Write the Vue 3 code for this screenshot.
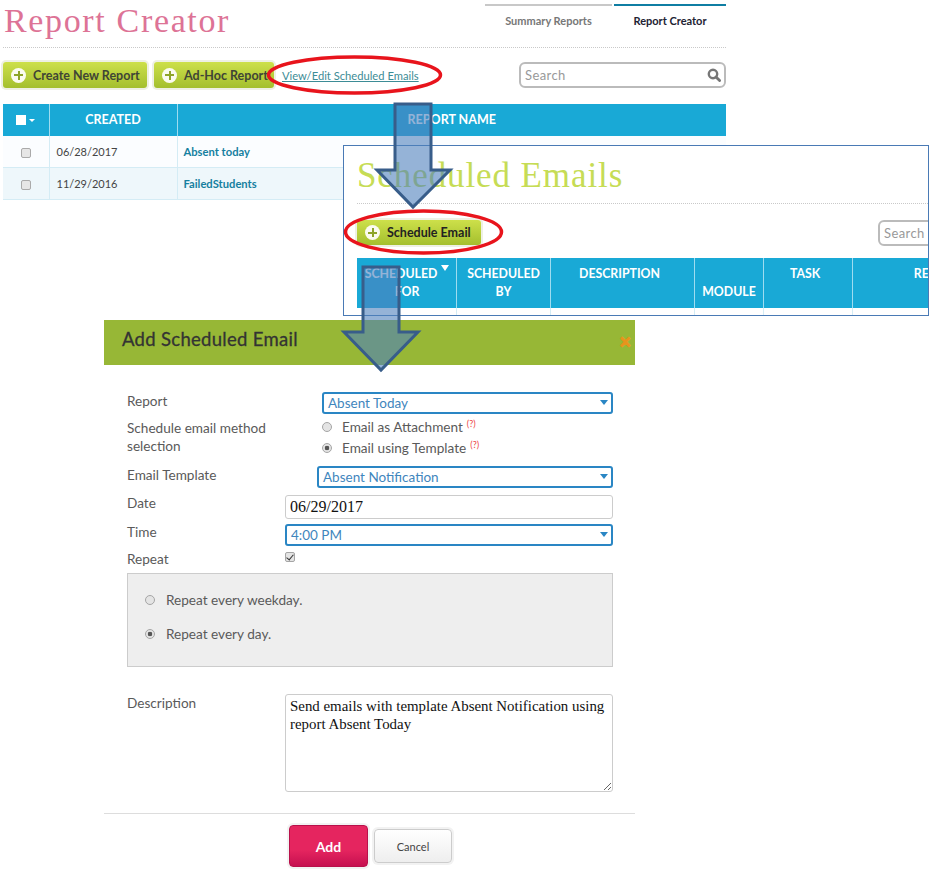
<script setup>
import { ref } from 'vue'

const reports = ref([
  { created: '06/28/2017', name: 'Absent today' },
  { created: '11/29/2016', name: 'FailedStudents' }
])

const emailColumns = [
  { label: 'SCHEDULED FOR', width: 99, sorted: true },
  { label: 'SCHEDULED BY', width: 94 },
  { label: 'DESCRIPTION', width: 144, left: true },
  { label: 'MODULE', width: 69, bottom: true },
  { label: 'TASK', width: 89, left: true },
  { label: 'RESULT', width: 166 }
]

const date = ref('06/29/2017')
const description = ref('Send emails with template Absent Notification using report Absent Today')
</script>

<template>
  <div class="canvas">
    <!-- Report creator page -->
    <section class="report-panel">
      <header class="page-head">
        <h1 class="page-title">Report Creator</h1>
        <nav class="tabs">
          <a class="tab">Summary Reports</a>
          <a class="tab active">Report Creator</a>
        </nav>
      </header>

      <div class="toolbar">
        <button class="btn-green wide">
          <span class="plus"></span>
          Create New Report
        </button>
        <button class="btn-green">
          <span class="plus"></span>
          Ad-Hoc Report
        </button>
        <a class="sched-link">View/Edit Scheduled Emails</a>
        <div class="search">
          <span>Search</span>
          <svg width="14" height="14" viewBox="0 0 14 14">
            <circle cx="6" cy="6" r="4.2" fill="none" stroke="#777" stroke-width="2.4" />
            <path d="M9 9l3.6 3.6" stroke="#777" stroke-width="2.8" stroke-linecap="round" />
          </svg>
        </div>
      </div>

      <table class="report-table">
        <thead>
          <tr>
            <th class="col-check"><span class="head-check"></span><span class="caret"></span></th>
            <th class="col-created">CREATED</th>
            <th>REPORT NAME</th>
          </tr>
        </thead>
        <tbody>
          <tr v-for="row in reports" :key="row.name">
            <td class="center"><span class="row-check"></span></td>
            <td>{{ row.created }}</td>
            <td class="name">{{ row.name }}</td>
          </tr>
        </tbody>
      </table>
    </section>

    <!-- Scheduled emails page -->
    <section class="emails-panel">
      <h2 class="emails-title">Scheduled Emails</h2>
      <div class="emails-toolbar">
        <button class="btn-green schedule">
          <span class="plus"></span>
          Schedule Email
        </button>
        <div class="search cut"><span>Search</span></div>
      </div>
      <div class="emails-head">
        <div
          v-for="col in emailColumns"
          :key="col.label"
          class="emails-col"
          :class="{ bottom: col.bottom, left: col.left, sorted: col.sorted }"
          :style="{ width: col.width + 'px' }"
        >
          <span>{{ col.label }}</span>
          <i v-if="col.sorted" class="sort"></i>
        </div>
      </div>
      <div class="emails-row">
        <div v-for="col in emailColumns" :key="col.label" :style="{ width: col.width + 'px' }"></div>
      </div>
    </section>

    <!-- Add scheduled email dialog -->
    <section class="dialog">
      <header class="dialog-head">
        <h3>Add Scheduled Email</h3>
        <span class="close">×</span>
      </header>

      <div class="form">
        <div class="row">
          <label>Report</label>
          <div class="select s-report">Absent Today</div>
        </div>
        <div class="row row-method">
          <label>Schedule email method<br />selection</label>
          <div class="methods">
            <div class="option">
              <input type="radio" disabled />
              <span>Email as Attachment</span><sup>(?)</sup>
            </div>
            <div class="option">
              <input type="radio" disabled checked />
              <span>Email using Template</span><sup>(?)</sup>
            </div>
          </div>
        </div>
        <div class="row row-template">
          <label>Email Template</label>
          <div class="select s-template">Absent Notification</div>
        </div>
        <div class="row row-date">
          <label>Date</label>
          <input v-model="date" class="text-input" type="text" />
        </div>
        <div class="row row-time">
          <label>Time</label>
          <div class="select s-time">4:00 PM</div>
        </div>
        <div class="row row-repeat">
          <label>Repeat</label>
          <input class="repeat-check" type="checkbox" checked disabled />
        </div>
        <div class="repeat-box">
          <div class="option">
            <input type="radio" disabled />
            <span>Repeat every weekday.</span>
          </div>
          <div class="option">
            <input type="radio" disabled checked />
            <span>Repeat every day.</span>
          </div>
        </div>
        <div class="row row-desc">
          <label>Description</label>
          <textarea v-model="description" class="text-area"></textarea>
        </div>
      </div>

      <footer class="dialog-foot">
        <button class="btn-add">Add</button>
        <button class="btn-cancel">Cancel</button>
      </footer>
    </section>

    <!-- Red circles and blue arrows drawn on top of the collage -->
    <svg class="marks" width="929" height="872" viewBox="0 0 929 872">
      <ellipse cx="354.5" cy="75" rx="86" ry="18" class="ring" />
      <ellipse cx="423.5" cy="232" rx="78" ry="21" class="ring" />
      <path class="arrow" d="M395 104H431V170H450L413 207L377 170H395Z" />
      <path class="arrow" d="M363 267H399V332H418L381 370L344 332H363Z" />
    </svg>
  </div>
</template>

<style scoped>
.canvas {
  position: relative;
  width: 929px;
  height: 872px;
  overflow: hidden;
  background: #fff;
  font-family: "Lato", "Liberation Sans", sans-serif;
  color: #555;
}

/* Report panel */
.report-panel {
  position: absolute;
  left: 3px;
  top: 0;
  width: 723px;
}

.page-head {
  display: flex;
  justify-content: space-between;
  height: 47px;
  border-bottom: 1px dotted #c9c9c9;
}

.page-title {
  margin: 2px 0 0 1px;
  font-family: "Liberation Serif", serif;
  font-weight: 400;
  font-size: 34px;
  line-height: 38px;
  letter-spacing: 1.65px;
  color: #dd7396;
}

.tabs {
  display: flex;
  gap: 2px;
  padding-top: 4px;
}

.tab {
  width: 127px;
  border-top: 2px solid #c8c8c8;
  padding-top: 8px;
  text-align: center;
  font-size: 11px;
  font-weight: 700;
  color: #777;
}

.tab.active {
  width: 112px;
  border-top-color: #0f7ea3;
  color: #223;
}

.toolbar {
  display: flex;
  align-items: center;
  gap: 7px;
  height: 26px;
  margin: 14px 0 16px;
}

.btn-green {
  display: flex;
  align-items: center;
  gap: 7px;
  width: 120px;
  height: 26px;
  padding: 0 0 0 8px;
  border: none;
  border-radius: 3px;
  background: linear-gradient(#cde04a, #a4bf2e);
  box-shadow: 0 0 0 2px #eef0e4;
  font-family: inherit;
  font-size: 12.5px;
  font-weight: 700;
  color: #3f4535;
  white-space: nowrap;
}

.btn-green.wide {
  width: 144px;
}

.plus {
  position: relative;
  flex: none;
  width: 15px;
  height: 15px;
  border-radius: 50%;
  background: #fbfbf0;
}

.plus::before,
.plus::after {
  content: "";
  position: absolute;
  background: #8ea52a;
}

.plus::before {
  left: 3px;
  right: 3px;
  top: 6.5px;
  height: 2px;
}

.plus::after {
  top: 3px;
  bottom: 3px;
  left: 6.5px;
  width: 2px;
}

.sched-link {
  margin-left: 1px;
  font-size: 11.2px;
  color: #3d8c96;
  text-decoration: underline;
}

.search {
  display: flex;
  align-items: center;
  justify-content: space-between;
  box-sizing: border-box;
  width: 207px;
  height: 26px;
  margin-left: auto;
  padding: 0 3px 1px 4px;
  border: 2px solid #bbb;
  border-radius: 6px;
  font-size: 13px;
  color: #999;
  letter-spacing: 0.4px;
}

.report-table {
  width: 723px;
  border-collapse: collapse;
  table-layout: fixed;
  font-size: 11px;
}

.report-table th {
  box-sizing: border-box;
  height: 32px;
  padding: 0 0 2px;
  background: #19a9d6;
  color: #fff;
  font-size: 12.5px;
  font-weight: 700;
  border-left: 1px solid #9fdcf0;
}

.report-table th:first-child,
.report-table td:first-child {
  border-left: none;
}

.col-check {
  width: 46px;
}

.col-created {
  width: 128px;
}

.head-check {
  display: inline-block;
  width: 10px;
  height: 10px;
  background: #fff;
  vertical-align: -1px;
}

.caret {
  display: inline-block;
  margin-left: 3px;
  border: 3px solid transparent;
  border-top: 3px solid #fff;
  border-bottom: none;
  vertical-align: 2px;
}

.report-table td {
  height: 31px;
  padding: 0 0 0 7px;
  background: #fbfdff;
  color: #444;
  border-left: 1px solid #d4ecf5;
  border-bottom: 1px solid #d4ecf5;
}

.report-table tr:nth-child(2) td {
  background: #eef7fb;
}

.report-table td.center {
  padding: 0;
  text-align: center;
}

.report-table td.name {
  padding-left: 6px;
  font-size: 11.2px;
  font-weight: 700;
  color: #15809f;
}

.row-check {
  display: inline-block;
  box-sizing: border-box;
  width: 10px;
  height: 10px;
  border: 1px solid #aaa;
  border-radius: 2px;
  background: #e6e6e6;
  vertical-align: middle;
}

/* Scheduled emails panel */
.emails-panel {
  position: absolute;
  left: 343px;
  top: 145px;
  box-sizing: border-box;
  width: 586px;
  height: 171px;
  padding: 0 0 0 13px;
  background: #fff;
  border: 1px solid #4a7ab5;
  overflow: hidden;
}

.emails-title {
  height: 57px;
  margin: 0;
  border-bottom: 1px dotted #c9c9c9;
  font-family: "Liberation Serif", serif;
  font-weight: 400;
  font-size: 35px;
  line-height: 60px;
  letter-spacing: 0.9px;
  color: #c6dc55;
  white-space: nowrap;
}

.emails-toolbar {
  display: flex;
  justify-content: space-between;
  height: 26px;
  margin: 16px 0 12px;
}

.btn-green.schedule {
  width: 124px;
  height: 25px;
  color: #222;
}

.search.cut {
  flex: none;
  width: 120px;
  margin: 0 -70px 0 0;
}

.emails-head {
  display: flex;
  width: 620px;
  height: 50px;
  padding-left: 1px;
  background: #19a9d6;
  color: #fff;
  font-size: 12.3px;
  font-weight: 700;
}

.emails-col {
  position: relative;
  flex: none;
  box-sizing: border-box;
  padding: 7px 8px 0;
  border-right: 1px solid #9fdcf0;
  text-align: center;
  line-height: 18px;
}

.emails-col.bottom {
  padding-top: 25px;
  padding-left: 0;
  padding-right: 0;
}

.emails-col.left {
  padding-left: 4px;
  padding-right: 10px;
}

/* the wrapped first line sits left of centre to leave room for the sort mark */
.emails-col.sorted {
  text-indent: -12px;
}

.sort {
  position: absolute;
  right: 7px;
  top: 7px;
  border: 4px solid transparent;
  border-top: 6px solid #fff;
  border-bottom: none;
}

.emails-row {
  display: flex;
  height: 7px;
  padding-left: 1px;
}

.emails-row div {
  flex: none;
  box-sizing: border-box;
  border-right: 1px solid #d4ecf5;
}

/* Dialog */
.dialog {
  position: absolute;
  left: 104px;
  top: 320px;
  width: 531px;
}

.dialog-head {
  display: flex;
  justify-content: space-between;
  height: 45px;
  padding: 0 4px 0 18px;
  background: #97b736;
}

.dialog-head h3 {
  margin: 8px 0 0;
  font-size: 18.5px;
  line-height: 22px;
  font-weight: 400;
  letter-spacing: 0.3px;
  color: #333;
  -webkit-text-stroke: 0.3px #333;
}

.close {
  margin-top: 11px;
  font-size: 20px;
  line-height: 20px;
  font-weight: 700;
  color: #e8941c;
  -webkit-text-stroke: 1px #e8941c;
}

.form {
  padding: 27px 22px 0 23px;
  font-size: 13.6px;
}

.row {
  display: flex;
  align-items: flex-start;
}

.row label {
  flex: none;
  width: 158px;
  line-height: 18px;
  color: #5a5a5a;
}

.select {
  position: relative;
  box-sizing: border-box;
  height: 22px;
  margin-left: auto;
  padding-left: 4px;
  border: 2px solid #2a86c4;
  border-radius: 3px;
  font-size: 13.5px;
  line-height: 19px;
  color: #3f86bd;
}

.select::after {
  content: "";
  position: absolute;
  right: 3px;
  top: 6px;
  border: 4px solid transparent;
  border-top: 5px solid #2a86c4;
  border-bottom: none;
}

.s-report {
  width: 291px;
}

.s-template {
  width: 296px;
}

.s-time {
  width: 328px;
}

.row-method {
  margin-top: 5px;
  height: 46px;
}

.methods {
  display: flex;
  flex-direction: column;
  gap: 3px;
  margin: -1px 0 0 37px;
}

.option {
  display: flex;
  align-items: center;
  height: 18px;
  color: #5a5a5a;
}

/* native radios drawn by hand so the grey matches */
.option input {
  appearance: none;
  box-sizing: border-box;
  width: 10px;
  height: 10px;
  margin: 0 10px 0 0;
  border: 1px solid #a5a5a5;
  border-radius: 50%;
  background: #e4e4e4;
}

.option input:checked {
  background: radial-gradient(circle, #555 0 2px, #e4e4e4 2.6px);
}

.option sup {
  margin: -8px 0 0 4px;
  font-size: 9px;
  color: #e44;
}

.row-template {
  margin-top: 1px;
  height: 29px;
}

.row-date {
  height: 29px;
}

.row-date label,
.row-time label {
  margin-top: -1px;
}

.text-input {
  box-sizing: border-box;
  width: 328px;
  height: 24px;
  padding: 0 4px;
  border: 1px solid #ccc;
  border-radius: 3px;
  font-family: "Liberation Serif", serif;
  font-size: 16px;
  color: #111;
}

.row-time {
  height: 28px;
}

.row-repeat {
  height: 21px;
}

.row-repeat label {
  margin-top: -2px;
}

.repeat-check {
  position: relative;
  appearance: none;
  box-sizing: border-box;
  width: 10px;
  height: 10px;
  margin: 0;
  border: 1px solid #a5a5a5;
  border-radius: 2px;
  background: #e4e4e4;
}

.repeat-check::after {
  content: "";
  position: absolute;
  left: 2px;
  top: 0;
  width: 3px;
  height: 6px;
  border: solid #333;
  border-width: 0 1.5px 1.5px 0;
  transform: rotate(40deg);
}

.repeat-box {
  box-sizing: border-box;
  display: flex;
  flex-direction: column;
  gap: 16px;
  width: 486px;
  height: 94px;
  padding: 17px 0 0 17px;
  border: 1px solid #ccc;
  background: #eee;
}

.repeat-box .option input {
  margin-right: 11px;
}

.row-desc {
  margin-top: 27px;
}

.text-area {
  box-sizing: border-box;
  width: 328px;
  height: 98px;
  padding: 2px 4px;
  border: 1px solid #ccc;
  border-radius: 3px;
  font-family: "Liberation Serif", serif;
  font-size: 14.9px;
  line-height: 18px;
  color: #111;
  outline: none;
}

.dialog-foot {
  display: flex;
  align-items: center;
  gap: 6px;
  margin-top: 21px;
  padding: 11px 0 0 185px;
  border-top: 1px solid #ddd;
}

.btn-add {
  width: 79px;
  height: 42px;
  border: 1px solid #b8104a;
  border-radius: 4px;
  background: linear-gradient(#e5255f 60%, #c61050);
  box-shadow: 0 0 0 2px #f2f2f2;
  font-family: inherit;
  font-size: 14px;
  font-weight: 700;
  color: #fff;
}

.btn-cancel {
  width: 78px;
  height: 34px;
  border: 1px solid #ccc;
  border-radius: 4px;
  background: linear-gradient(#fff, #eee);
  box-shadow: 0 0 0 2px #f2f2f2;
  font-family: inherit;
  font-size: 11px;
  color: #444;
}

/* Annotations */
.marks {
  position: absolute;
  left: 0;
  top: 0;
  pointer-events: none;
}

.ring {
  fill: none;
  stroke: #e8141c;
  stroke-width: 3.5;
}

.arrow {
  fill: rgba(79, 129, 189, 0.6);
  stroke: #385d8a;
  stroke-width: 3;
}
</style>

<style>
html,
body {
  margin: 0;
  background: #fff;
}
</style>
